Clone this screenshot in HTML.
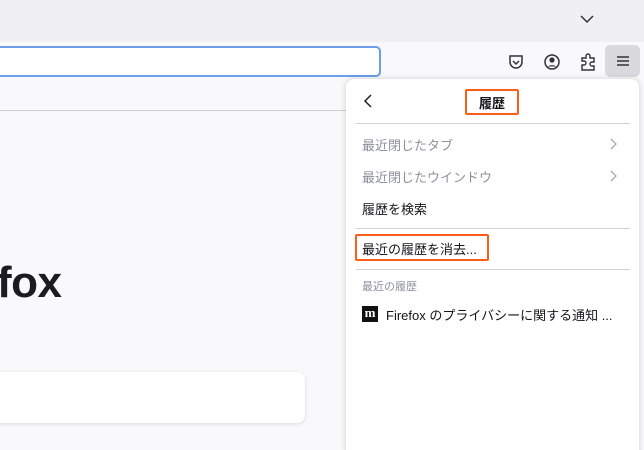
<!DOCTYPE html>
<html><head><meta charset="utf-8"><style>
*{margin:0;padding:0;box-sizing:border-box}
html{width:644px;height:450px;overflow:hidden}
body{width:644px;height:450px;overflow:hidden;position:relative;background:#f9f9fb;font-family:"Liberation Sans","Noto Sans CJK JP",sans-serif}
.abs{position:absolute}
.tabbar{left:0;top:0;width:644px;height:42px;background:#f0f0f4}
.toolbar{left:0;top:42px;width:644px;height:40px;background:#f9f9fb}
.line{left:0;top:110px;width:346px;height:1px;background:#cfcfd8}
.url{left:-10px;top:46px;width:391px;height:31px;border:2px solid #6b9ee8;border-radius:5px;background:#fff}
.menubtn{left:605px;top:45px;width:35px;height:32px;background:#d9d9de;border-radius:5px}
.panel{left:346px;top:79px;width:293px;height:380px;background:#fff;border-radius:8px;box-shadow:0 0 6px rgba(0,0,0,.18)}
.sep{height:1px;background:#cfcfd8;left:356px;width:274px}
.item{left:362px;font-size:13px;color:#15141a;white-space:nowrap}
.grey{color:#8f8f9d}
.obox{border:2.5px solid #ff5c1a;border-radius:2px}
.fox{left:-3px;top:258px;font-size:44px;font-weight:bold;color:#1c1b22;letter-spacing:-0.5px}
.search{left:-10px;top:372px;width:315px;height:51px;background:#fff;border-radius:8px;box-shadow:0 1px 4px rgba(0,0,0,.12)}
</style></head><body>
<div class="abs tabbar"></div>
<svg class="abs" style="left:579px;top:13px" width="16" height="12"><path d="M2 3 L8 9 L14 3" fill="none" stroke="#333" stroke-width="1.5"/></svg>
<div class="abs toolbar"></div>
<div class="abs url"></div>
<svg class="abs" style="left:507px;top:53px" width="18" height="18"><path d="M3 3h12v6a6 6 0 0 1-12 0z" fill="none" stroke="#333" stroke-width="1.5"/><path d="M6 8l3 3 3-3" fill="none" stroke="#333" stroke-width="1.5"/></svg>
<svg class="abs" style="left:543px;top:53px" width="18" height="18"><circle cx="9" cy="9" r="7" fill="none" stroke="#333" stroke-width="1.5"/><circle cx="9" cy="7" r="2.6" fill="#333"/><path d="M4.5 13.5a6 4 0 0 1 9 0" fill="#333"/></svg>
<svg class="abs" style="left:579px;top:52px" width="18" height="20"><path d="M3 6h4V4a2 2 0 0 1 4 0v2h4v4h-2a2 2 0 0 0 0 4h2v4H3v-5h2a2 2 0 0 0 0-4H3z" fill="none" stroke="#333" stroke-width="1.4"/></svg>
<div class="abs menubtn"></div>
<svg class="abs" style="left:615px;top:54px" width="16" height="14"><path d="M2 3h12M2 7h12M2 11h12" stroke="#333" stroke-width="1.4"/></svg>
<div class="abs line"></div>
<div class="abs fox">fox</div>
<div class="abs search"></div>
<div class="abs panel"></div>
<svg class="abs" style="left:362px;top:93px" width="12" height="16"><path d="M9 2 L3 8 L9 14" fill="none" stroke="#222" stroke-width="1.5"/></svg>
<div class="abs obox" style="left:465px;top:89px;width:54px;height:26px"></div>
<div class="abs item" style="left:479px;top:93px;font-weight:bold">履歴</div>
<div class="abs sep" style="top:123px"></div>
<div class="abs item grey" style="top:135px">最近閉じたタブ</div>
<svg class="abs" style="left:609px;top:137px" width="10" height="14"><path d="M2 2l5 5-5 5" fill="none" stroke="#aaa" stroke-width="1.3"/></svg>
<div class="abs item grey" style="top:167px">最近閉じたウインドウ</div>
<svg class="abs" style="left:609px;top:169px" width="10" height="14"><path d="M2 2l5 5-5 5" fill="none" stroke="#aaa" stroke-width="1.3"/></svg>
<div class="abs item" style="top:199px">履歴を検索</div>
<div class="abs sep" style="top:228px"></div>
<div class="abs obox" style="left:355px;top:234px;width:134px;height:27px"></div>
<div class="abs item" style="top:239px">最近の履歴を消去...</div>
<div class="abs sep" style="top:269px"></div>
<div class="abs item grey" style="top:278px;font-size:11px">最近の履歴</div>
<div class="abs" style="left:362px;top:306px;width:16px;height:16px;background:#111;color:#fff;font-size:13px;font-weight:bold;line-height:14px;text-align:center;font-family:'Liberation Serif',serif">m</div>
<div class="abs item" style="left:386px;top:305px">Firefox のプライバシーに関する通知 ...</div>
</body></html>
